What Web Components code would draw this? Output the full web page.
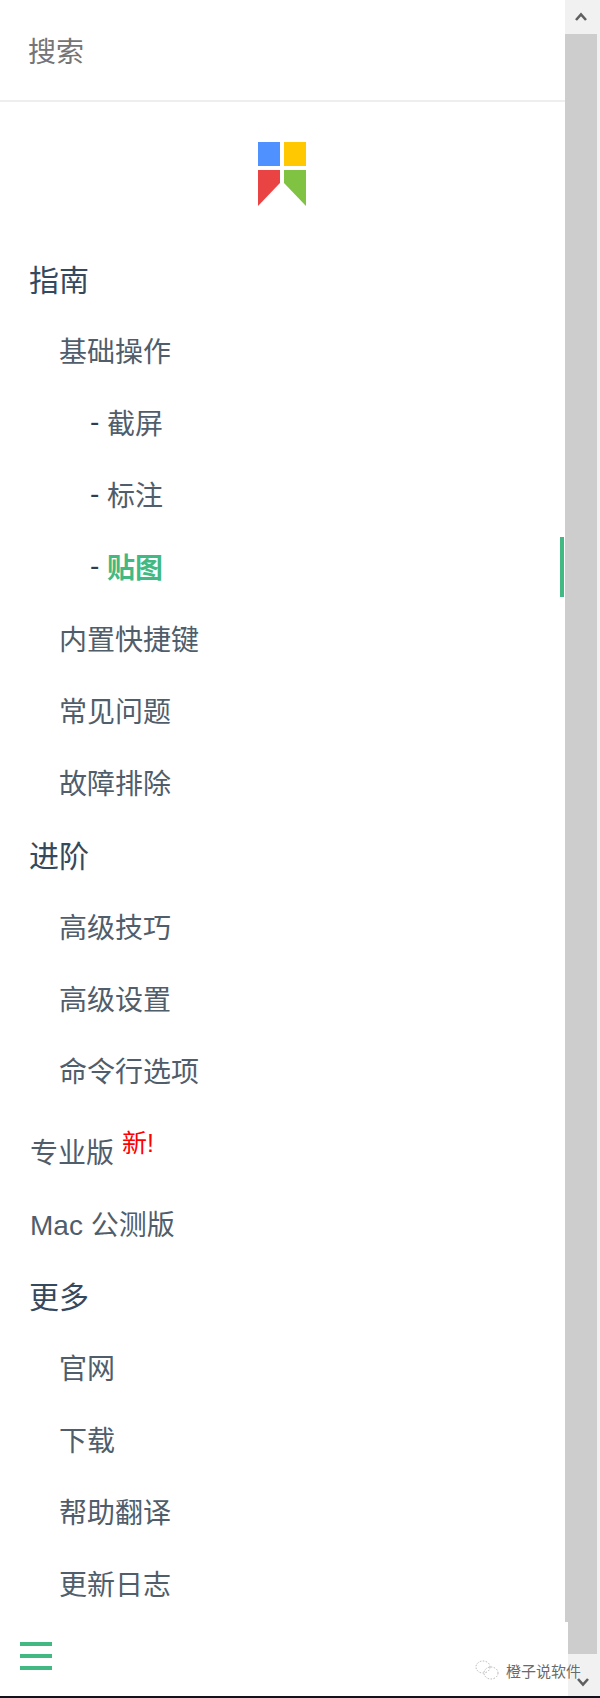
<!DOCTYPE html>
<html lang="zh">
<head>
<meta charset="utf-8">
<title>Snipaste</title>
<style>
  html, body { margin: 0; height: 100%; overflow: hidden; background: #fff; }
</style>
</head>
<body>
<doc-shell>
  <search-box></search-box>
  <app-logo></app-logo>
  <nav-list>
    <nav-item level="1" heading>指南</nav-item>
    <nav-item level="2">基础操作</nav-item>
    <nav-item level="3">截屏</nav-item>
    <nav-item level="3">标注</nav-item>
    <nav-item level="3" active>贴图</nav-item>
    <nav-item level="2">内置快捷键</nav-item>
    <nav-item level="2">常见问题</nav-item>
    <nav-item level="2">故障排除</nav-item>
    <nav-item level="1" heading>进阶</nav-item>
    <nav-item level="2">高级技巧</nav-item>
    <nav-item level="2">高级设置</nav-item>
    <nav-item level="2">命令行选项</nav-item>
    <nav-item level="1" tall>专业版<span slot="badge">新!</span></nav-item>
    <nav-item level="1">Mac 公测版</nav-item>
    <nav-item level="1" heading>更多</nav-item>
    <nav-item level="2">官网</nav-item>
    <nav-item level="2">下载</nav-item>
    <nav-item level="2">帮助翻译</nav-item>
    <nav-item level="2">更新日志</nav-item>
  </nav-list>
</doc-shell>

<script>
const FONT = '"Liberation Sans", "Noto Sans CJK SC", sans-serif';

class DocShell extends HTMLElement {
  constructor() {
    super();
    this.attachShadow({ mode: 'open' });
  }

  connectedCallback() {
    this.shadowRoot.innerHTML = `
      <style>
        :host {
          display: block;
          position: relative;
          width: 600px;
          height: 1698px;
          overflow: hidden;
          font-family: ${FONT};
          background: #fff;
        }

        .main {
          display: flex;
          height: 1696px;
        }

        .sidebar {
          width: 565px;
          flex: none;
        }

        .window-edge {
          height: 2px;
          background: #12121c;
        }
      </style>
      <div class="main">
        <div class="sidebar"><slot></slot></div>
        <doc-scrollbar></doc-scrollbar>
      </div>
      <div class="window-edge"></div>
      <menu-toggle></menu-toggle>
      <wechat-mark></wechat-mark>
    `;
  }
}
customElements.define('doc-shell', DocShell);

class SearchBox extends HTMLElement {
  constructor() {
    super();
    this.attachShadow({ mode: 'open' });
  }

  connectedCallback() {
    this.shadowRoot.innerHTML = `
      <style>
        :host {
          display: flex;
          align-items: center;
          box-sizing: border-box;
          height: 102px;
          padding-left: 28px;
          border-bottom: 2px solid #eee;
          color: #757575;
          font-size: 28px;
        }
      </style>
      搜索
    `;
  }
}
customElements.define('search-box', SearchBox);

class AppLogo extends HTMLElement {
  constructor() {
    super();
    this.attachShadow({ mode: 'open' });
  }

  connectedCallback() {
    this.shadowRoot.innerHTML = `
      <style>
        :host {
          display: flex;
          justify-content: center;
          padding: 40px 1px 36px 0;
        }

        svg {
          display: block;
          width: 48px;
          height: 64px;
        }
      </style>
      <svg viewBox="0 0 48 64" aria-label="Snipaste">
        <rect x="0" y="0" width="22" height="24" fill="#4f92ff"></rect>
        <rect x="26" y="0" width="22" height="24" fill="#ffc800"></rect>
        <polygon points="0,28 22,28 22,41 0,64" fill="#ea4343"></polygon>
        <polygon points="26,28 48,28 48,64 26,41" fill="#80c242"></polygon>
      </svg>
    `;
  }
}
customElements.define('app-logo', AppLogo);

class NavList extends HTMLElement {
  constructor() {
    super();
    this.attachShadow({ mode: 'open' });
  }

  connectedCallback() {
    this.shadowRoot.innerHTML = `
      <style>
        :host {
          display: flex;
          flex-direction: column;
        }
      </style>
      <slot></slot>
    `;
  }
}
customElements.define('nav-list', NavList);

class NavItem extends HTMLElement {
  constructor() {
    super();
    this.attachShadow({ mode: 'open' });
  }

  connectedCallback() {
    const level = this.getAttribute('level');
    this.shadowRoot.innerHTML = `
      <style>
        :host {
          display: flex;
          align-items: center;
          position: relative;
          box-sizing: border-box;
          height: 72px;
          color: #505d6b;
          font-size: 28px;
          white-space: pre;
        }

        :host([level="1"]) { padding-left: 30px; }
        :host([level="2"]) { padding-left: 59px; }
        :host([level="3"]) { padding-left: 90px; }

        :host([heading]) {
          padding-left: 29px;
          color: #34495e;
          font-size: 30px;
        }

        :host([tall]) {
          height: 81px;
          padding-top: 9px;
        }

        .dash {
          color: #2c3e50;
        }

        :host([active]) .label {
          color: #42b983;
          font-weight: bold;
        }

        :host([active])::after {
          content: "";
          position: absolute;
          top: 7px;
          right: 1px;
          width: 4px;
          height: 60px;
          background: #42b983;
        }

        ::slotted([slot="badge"]) {
          position: relative;
          top: -10px;
          margin-left: 8px;
          color: #f00;
          font-size: 25px;
        }
      </style>
      ${level === '3' ? '<span class="dash">- </span>' : ''}<span class="label"><slot></slot></span><slot name="badge"></slot>
    `;
  }
}
customElements.define('nav-item', NavItem);

class DocScrollbar extends HTMLElement {
  constructor() {
    super();
    this.attachShadow({ mode: 'open' });
  }

  connectedCallback() {
    this.shadowRoot.innerHTML = `
      <style>
        :host {
          display: flex;
          flex-direction: column;
          width: 35px;
          background: #f1f1f1;
        }

        .arrow {
          display: flex;
          align-items: center;
          justify-content: center;
          width: 32px;
          height: 34px;
        }

        .thumb {
          width: 32px;
          height: 1588px;
          background: #cdcdcd;
        }

        .thumb-end {
          width: 29px;
          height: 32px;
          border-left: 3px solid #fff;
          background: #cdcdcd;
        }

        .foot {
          flex: 1;
          display: flex;
          justify-content: center;
          border-left: 3px solid #fff;
          padding-top: 23px;
        }

        .foot svg {
          margin-left: -3px;
        }

        svg {
          display: block;
          width: 12px;
          height: 10px;
        }
      </style>
      <div class="arrow">
        <svg viewBox="0 0 12 10"><polyline points="1,8 6,2.5 11,8" fill="none" stroke="#5f5f5f" stroke-width="2.6"></polyline></svg>
      </div>
      <div class="thumb"></div>
      <div class="thumb-end"></div>
      <div class="foot">
        <svg viewBox="0 0 12 10"><polyline points="1,2 6,7.5 11,2" fill="none" stroke="#5f5f5f" stroke-width="2.6"></polyline></svg>
      </div>
    `;
  }
}
customElements.define('doc-scrollbar', DocScrollbar);

class MenuToggle extends HTMLElement {
  constructor() {
    super();
    this.attachShadow({ mode: 'open' });
  }

  connectedCallback() {
    this.shadowRoot.innerHTML = `
      <style>
        :host {
          display: flex;
          flex-direction: column;
          gap: 8px;
          position: absolute;
          left: 20px;
          top: 1642px;
          width: 32px;
        }

        span {
          height: 4px;
          background: #42b983;
        }
      </style>
      <span></span><span></span><span></span>
    `;
  }
}
customElements.define('menu-toggle', MenuToggle);

class WechatMark extends HTMLElement {
  constructor() {
    super();
    this.attachShadow({ mode: 'open' });
  }

  connectedCallback() {
    this.shadowRoot.innerHTML = `
      <style>
        :host {
          display: flex;
          align-items: center;
          gap: 7px;
          position: absolute;
          left: 475px;
          top: 1660px;
          height: 20px;
          color: #6a6a6a;
          font-size: 15px;
          white-space: nowrap;
          text-shadow: 0 0 1px #fff, 1px 0 0 #fff;
        }

        svg {
          display: block;
          width: 24px;
          height: 20px;
        }
      </style>
      <svg viewBox="0 0 24 20" fill="none" stroke="#b4b4b4" stroke-width="1" stroke-dasharray="1.5 1.5">
        <ellipse cx="8" cy="7" rx="7" ry="6"></ellipse>
        <ellipse cx="16" cy="13" rx="7" ry="6"></ellipse>
      </svg>
      橙子说软件
    `;
  }
}
customElements.define('wechat-mark', WechatMark);
</script>
</body>
</html>
